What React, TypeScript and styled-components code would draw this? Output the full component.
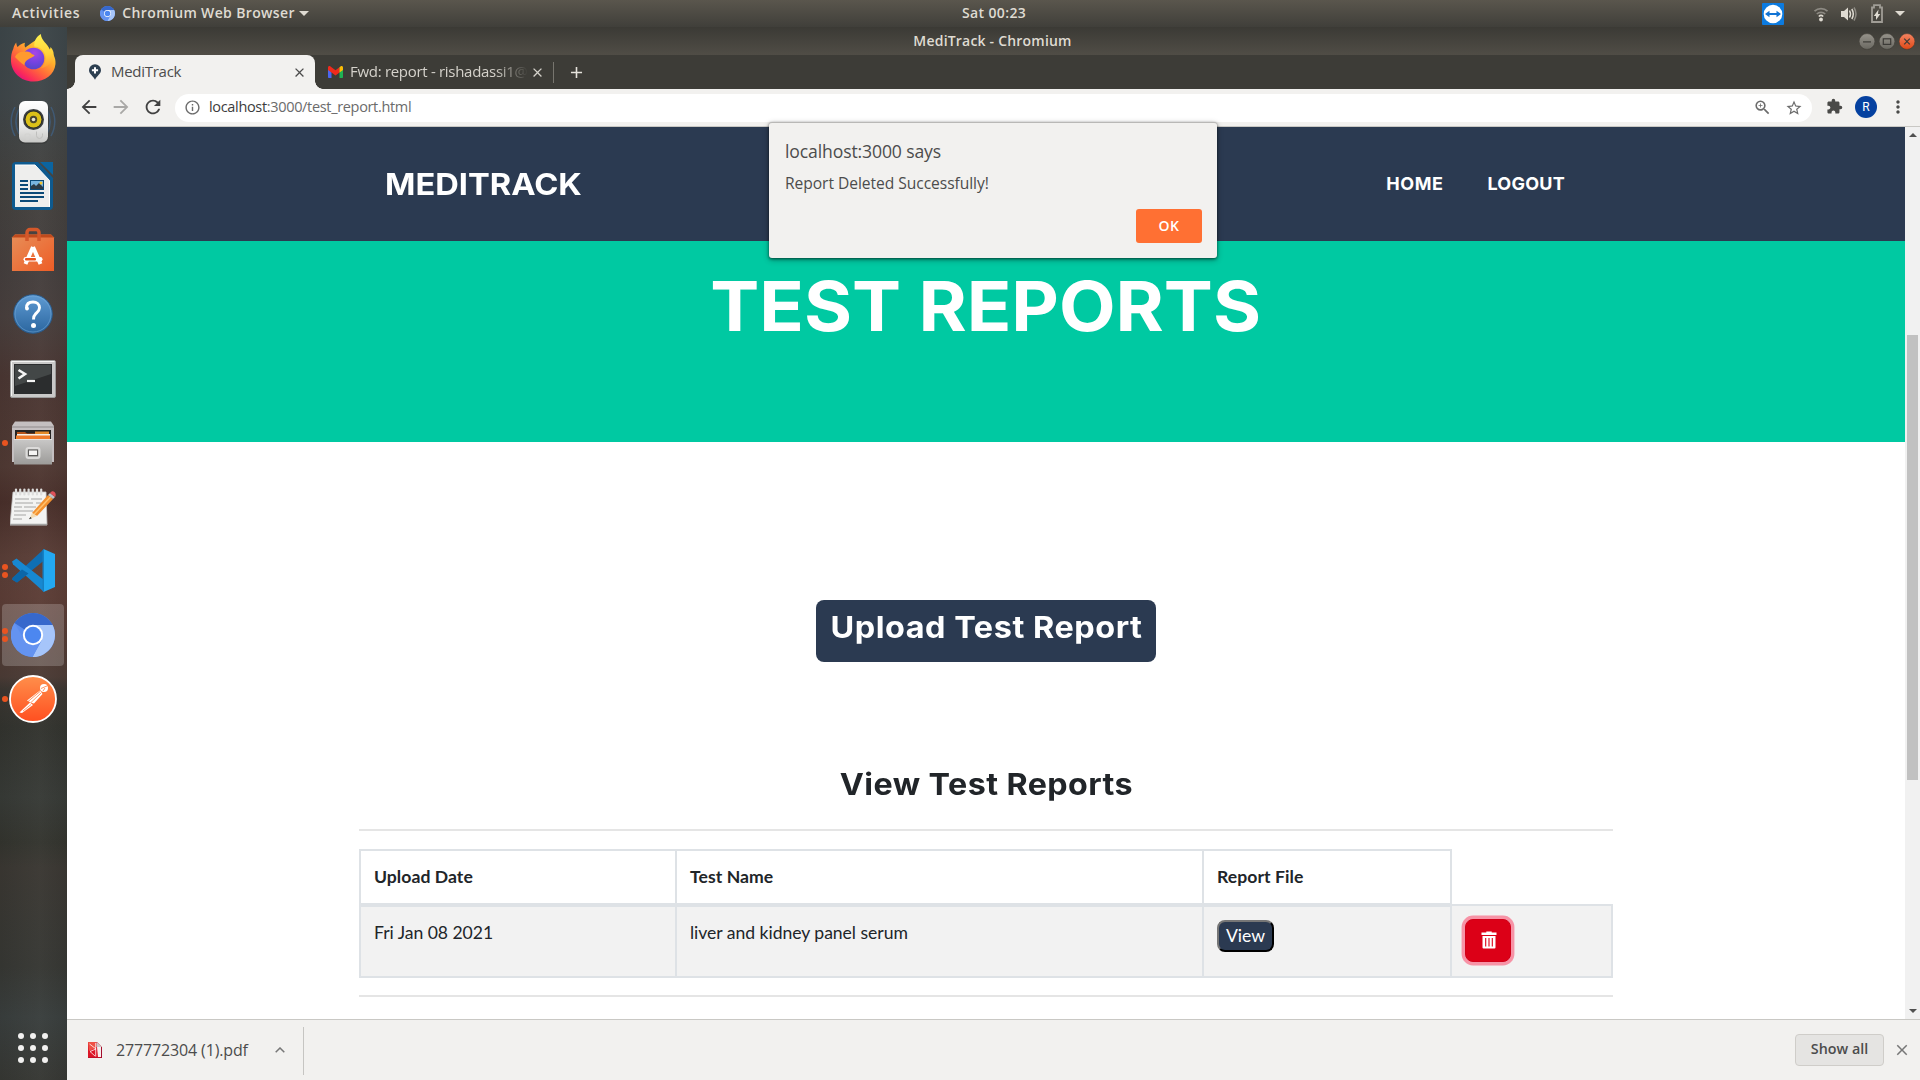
import React from 'react';
import styled, { createGlobalStyle, css } from 'styled-components';
import {
  MdArrowBack, MdArrowForward, MdRefresh, MdInfoOutline, MdZoomIn, MdStarBorder, MdExtension, MdMoreVert, MdClose, MdAdd,
} from 'react-icons/md';

const ui = '"Open Sans", "Noto Sans", sans-serif';
const display = 'Inter, sans-serif';
const body = 'Lato, sans-serif';
const navy = '#2c3e50';
const navyBg = '#2b3a51';
const teal = '#00c9a2';

const GlobalStyle = createGlobalStyle`
  * { box-sizing: border-box; }
  html, body { margin: 0; height: 1080px; overflow: hidden; background: #fff; }
  svg { display: block; flex: none; }
`;

const Desktop = styled.div`
  display: grid;
  grid-template: 27px 1053px / 67px 1853px;
  width: 1920px;
  height: 1080px;
  font-family: ${ui};
`;

/* ---------- top panel ---------- */
const TopPanel = styled.header`
  grid-column: 1 / 3;
  display: grid;
  grid-template-columns: 950px auto 1fr;
  align-items: center;
  padding: 0 15px 0 12px;
  background: linear-gradient(#5a564d, #403f3a);
  color: #dfdbd2;
  font: 600 14px/26px ${ui};
`;
const PanelGroup = styled.div`
  display: flex;
  align-items: center;
`;
const PanelEnd = styled(PanelGroup)`
  justify-content: flex-end;
  padding-left: 3px;
`;
const PanelText = styled.span<{ $ls: number; $ml?: number }>`
  letter-spacing: ${p => p.$ls}px;
  margin-left: ${p => p.$ml ?? 0}px;
  padding-bottom: 1px;
  white-space: nowrap;
`;
const Caret = styled.i<{ $ml: number }>`
  margin-left: ${p => p.$ml}px;
  border: 5px solid transparent;
  border-top: 5px solid #dfdbd2;
  border-bottom: 0;
`;
const Gap = styled.span<{ $w: number }>`
  width: ${p => p.$w}px;
  flex: none;
`;

/* ---------- dock ---------- */
const Dock = styled.aside`
  display: flex;
  flex-direction: column;
  background:
    linear-gradient(90deg, rgba(0,0,0,.06), rgba(255,255,255,.02) 60%, rgba(0,0,0,.05)),
    linear-gradient(#3e474a 0, #40474a 70px, #44423f 160px, #453f3e 240px, #49403e 290px, #4b3733 350px,
      #513a34 440px, #4a302b 475px, #5b3f38 530px, #5d3e37 570px, #553c35 610px, #4c3c36 650px, #3c3732 662px, #33342f 700px,
      #383b37 770px, #34352f 815px, #3b3833 840px, #373834 940px, #3a3f3e 990px, #373834 1053px);
`;
const DockCell = styled.div<{ $active?: boolean }>`
  position: relative;
  height: 64.1px;
  display: flex;
  align-items: center;
  justify-content: center;
  padding: 0 1px 2px 0;
  flex: none;
  ${p => p.$active && css`
    &::before {
      content: '';
      position: absolute;
      inset: 0 3px 2px 2px;
      border-radius: 4px;
      background: rgba(255, 255, 255, .2);
    }
  `}
  > svg { position: relative; }
`;
const Dots = styled.div`
  position: absolute;
  left: 2px;
  top: 31px;
  display: flex;
  flex-direction: column;
  gap: 2px;
  transform: translateY(-50%);
`;
const Dot = styled.i`
  width: 6px;
  height: 6px;
  border-radius: 50%;
  background: #e95420;
`;
const AppsGrid = styled.div`
  margin: auto auto 17px 18px;
  display: grid;
  grid-template-columns: repeat(3, 6px);
  gap: 6px;
`;
const AppsDot = styled.i`
  width: 6px;
  height: 6px;
  border-radius: 50%;
  background: #f2f1f0;
`;

/* ---------- browser window ---------- */
const Browser = styled.section`
  position: relative;
  display: grid;
  grid-template: 28px 34px 38px 892px 61px / 1853px;
`;
const TitleBar = styled.div`
  display: grid;
  grid-template-columns: 1fr auto 1fr;
  align-items: center;
  padding-right: 5px;
  background: linear-gradient(#3b3a35, #504d46);
  color: #dfdbd2;
  font: 600 14px/28px ${ui};
`;
const TitleText = styled.span`
  letter-spacing: .2px;
  padding-left: 3px;
`;
const WinButtons = styled.div`
  display: flex;
  justify-content: flex-end;
  gap: 4px;
`;
const TabStrip = styled.div`
  display: flex;
  background: #3d3c37;
  padding-left: 8px;
  font: 400 15px/32px ${ui};
`;
const Tab = styled.div<{ $w: number; $active?: boolean }>`
  position: relative;
  display: flex;
  align-items: center;
  width: ${p => p.$w}px;
  height: 34px;
  padding-left: 13px;
  color: ${p => (p.$active ? '#4c4c4c' : '#d5d2cb')};
  ${p => p.$active && css`
    background: #f2f1ef;
    border-radius: 8px 8px 0 0;
    &::before, &::after {
      content: '';
      position: absolute;
      bottom: 0;
      width: 8px;
      height: 8px;
    }
    &::before { left: -8px; background: radial-gradient(circle at 0 0, transparent 7.5px, #f2f1ef 8px); }
    &::after { right: -8px; background: radial-gradient(circle at 100% 0, transparent 7.5px, #f2f1ef 8px); }
  `}
`;
const TabLabel = styled.span<{ $w: number; $ls: number; $ml: number; $fade?: boolean }>`
  width: ${p => p.$w}px;
  margin-left: ${p => p.$ml}px;
  padding-bottom: 2px;
  letter-spacing: ${p => p.$ls}px;
  white-space: nowrap;
  ${p => p.$fade && css`
    -webkit-mask-image: linear-gradient(90deg, #000 145px, transparent 178px);
    mask-image: linear-gradient(90deg, #000 145px, transparent 178px);
  `}
`;
const TabDivider = styled.i`
  width: 1px;
  height: 21px;
  margin: 7px 13px 0 -1px;
  background: #77756e;
`;
const NewTab = styled.div`
  display: flex;
  align-items: center;
  color: #e6e3dc;
`;

const Toolbar = styled.div`
  display: flex;
  align-items: center;
  padding: 0 12px 2px 11px;
  background: #f2f1ef;
  border-bottom: 1px solid #c9c8c4;
  color: #4a4a48;
`;
const NavIcons = styled.div`
  display: flex;
  gap: 10px;
  width: 97px;
  color: #414141;
  svg:nth-child(2) { color: #a9a8a6; }
`;
const Omnibox = styled.div`
  display: flex;
  align-items: center;
  flex: 1;
  height: 28px;
  margin: 2px 14px 0 0;
  padding: 0 9px 0 9px;
  border-radius: 14px;
  background: #fff;
  color: #6b6b6b;
  font: 400 14.5px/26px ${ui};
`;
const Url = styled.span`
  margin-left: 8px;
  padding-bottom: 2px;
  letter-spacing: -.33px;
  flex: 1;
  b { font-weight: 400; color: #3c3c3c; }
`;
const ToolbarEnd = styled.div`
  display: flex;
  align-items: center;
`;
const Avatar = styled.span`
  display: flex;
  align-items: center;
  justify-content: center;
  width: 22px;
  height: 22px;
  margin: 0 11px 0 12px;
  border-radius: 50%;
  background: #0541a0;
  color: #fff;
  font: 400 12px/22px Roboto, sans-serif;
`;

/* ---------- page ---------- */
const Viewport = styled.div`
  display: grid;
  grid-template-columns: 1838px 15px;
  overflow: hidden;
`;
const Page = styled.main`
  display: flex;
  flex-direction: column;
  align-items: center;
  background: #fff;
`;
const Navbar = styled.nav`
  display: flex;
  align-items: center;
  width: 100%;
  height: 114px;
  padding: 0 340px 2px 318px;
  background: ${navyBg};
  color: #fff;
  font-family: ${display};
  font-weight: 700;
`;
const Wide = styled.span<{ $x: number; $from?: string }>`
  display: inline-block;
  transform: scaleX(${p => p.$x});
  transform-origin: ${p => p.$from ?? 'center'};
`;
const Brand = styled.a`
  font-size: 30.5px;
  flex: 1;
`;
const NavLink = styled.a<{ $ls: number }>`
  margin-left: 44px;
  font-size: 18px;
  letter-spacing: ${p => p.$ls}px;
`;
const Hero = styled.section`
  width: 100%;
  height: 201px;
  padding-top: 30px;
  background: ${teal};
  text-align: center;
`;
const HeroTitle = styled.h1`
  margin: 0;
  color: #fff;
  font: 700 69px/70px ${display};
`;
const UploadButton = styled.button`
  width: 340px;
  height: 62px;
  margin-top: 158px;
  padding: 0 0 8px;
  border: 0;
  border-radius: 8px;
  background: ${navyBg};
  color: #fff;
  font: 700 30px/54px ${display};
  letter-spacing: .5px;
  white-space: nowrap;
`;
const SectionTitle = styled.h2`
  margin: 102px 0 25px;
  color: #212529;
  font: 700 30px/40px ${display};
  letter-spacing: .4px;
`;
const Rule = styled.hr`
  width: 1254px;
  height: 2px;
  margin: 0;
  border: 0;
  flex: none;
  background: #e5e5e5;
`;
const ReportTable = styled.table`
  width: 1254px;
  margin: 18px 0 17px;
  border-collapse: collapse;
  table-layout: fixed;
  color: #212529;
  font: 400 17.6px/26px ${body};
  th, td {
    padding: 13px 13px 0;
    border: 2px solid #dee2e6;
    text-align: left;
    vertical-align: top;
  }
  th { border-bottom-width: 4px; font-weight: 700; letter-spacing: .05px; }
  td { background: #f2f2f2; letter-spacing: -.04px; }
`;
const HeadRow = styled.tr`height: 55px;`;
const BodyRow = styled.tr`height: 72px;`;
const Col = styled.col<{ $w: number }>`width: ${p => p.$w}px;`;
const ViewButton = styled.button`
  display: block;
  width: 57px;
  height: 32px;
  padding: 0 0 1px;
  border: 2px outset #767676;
  border-color: #767676 #212121 #212121 #767676;
  border-radius: 8px;
  background: ${navyBg};
  color: #fff;
  font: 400 17.6px/27px ${body};
`;
const DeleteButton = styled.button`
  display: flex;
  align-items: center;
  justify-content: center;
  width: 46px;
  height: 43px;
  padding: 0 0 2px 1px;
  border: 1px solid #d00018;
  border-radius: 8px;
  background: #dc0017;
  box-shadow: 0 0 0 3.4px rgba(252, 60, 95, .52);
`;
const ScrollTrack = styled.div`
  display: flex;
  flex-direction: column;
  align-items: center;
  padding: 6px 0 6px;
  background: #f1f1f1;
`;
const Thumb = styled.div`
  width: 11px;
  height: 445px;
  margin: 198px 0 auto;
  background: #c1c1c1;
`;
const Arrow = styled.i<{ $down?: boolean }>`
  border: 4px solid transparent;
  ${p => (p.$down ? 'border-top-color: #505050; border-bottom: 0;' : 'border-bottom-color: #505050; border-top: 0;')}
`;

/* ---------- download shelf ---------- */
const Shelf = styled.footer`
  display: flex;
  align-items: center;
  padding: 0 9px 0 21px;
  border-top: 1px solid #c9c8c4;
  background: #f2f1ef;
  color: #4c4c4c;
  font: 400 16px/58px ${ui};
`;
const FileName = styled.span`
  width: 159px;
  margin-left: 14px;
  letter-spacing: -.14px;
`;
const ShelfDivider = styled.i`
  width: 1px;
  height: 48px;
  margin: 2px auto 0 18px;
  background: #c6c5c2;
`;
const ShowAll = styled.button`
  width: 89px;
  height: 32px;
  margin-right: 9px;
  padding: 0 0 2px;
  border: 1px solid #cfcdc9;
  border-radius: 4px;
  background: #e5e4e2;
  color: #4c4c4c;
  font: 600 14.3px/28px ${ui};
`;

/* ---------- alert ---------- */
const Alert = styled.div`
  position: absolute;
  left: 702px;
  top: 95px;
  width: 448px;
  height: 136px;
  display: flex;
  flex-direction: column;
  padding: 16px 15px 0 16px;
  border-top: 1px solid #b9b8b6;
  border-radius: 3px;
  background: #f2f1ef;
  box-shadow: 0 1px 3px rgba(0, 0, 0, .55), 0 2px 6px rgba(0, 0, 0, .3);
  color: #4c4c4c;
`;
const AlertTitle = styled.div`
  font: 400 17.6px/24px ${ui};
  letter-spacing: -.13px;
`;
const AlertText = styled.div`
  margin-top: 7px;
  font: 400 15.6px/26px ${ui};
  letter-spacing: -.05px;
`;
const OkButton = styled.button`
  align-self: flex-end;
  width: 66px;
  height: 34px;
  margin-top: 13px;
  padding: 0;
  border: 0;
  border-radius: 3px;
  background: #ff7033;
  color: #fff;
  font: 600 14px/34px ${ui};
  letter-spacing: .4px;
`;

/* ---------- drawings ---------- */
const Firefox = () => (
  <svg width="48" height="50" viewBox="0 0 48 50">
    <defs>
      <linearGradient id="ffBody" x1=".85" y1=".1" x2=".2" y2=".95">
        <stop offset="0" stopColor="#ffe946" /><stop offset=".3" stopColor="#ffb02b" /><stop offset=".6" stopColor="#ff6a3a" /><stop offset=".85" stopColor="#fb2d58" /><stop offset="1" stopColor="#e6107c" />
      </linearGradient>
      <linearGradient id="ffFlame" x1=".5" y1="0" x2=".6" y2="1">
        <stop offset="0" stopColor="#fff14f" /><stop offset=".6" stopColor="#ffd13a" /><stop offset="1" stopColor="#ff9a2e" stopOpacity=".7" />
      </linearGradient>
      <radialGradient id="ffGlobe" cx=".55" cy=".25" r=".8">
        <stop offset="0" stopColor="#a745e8" /><stop offset=".55" stopColor="#7443e0" /><stop offset="1" stopColor="#5347c8" />
      </radialGradient>
    </defs>
    <path d="M7.2 9.5c.2 2.2.8 3.6 1.4 4.6C10.200 12.300 12.500 10.600 16 9.800c-.6 1.700-.5 3.200.2 4.600L29 5.500c.3 3 2 5 5 7.500 3 2.600 4.600 5 5.400 7.400.3-1.600.2-3-.1-4.400C44 19.500 47 25 46.500 31 45.500 41.500 36 48.500 24.500 48.500 11 48.500 2.500 38.500 2 28.500c-.3-5 .6-9.500 2.300-12.800.5-2.200 1.400-4.300 2.900-6.200z" fill="url(#ffBody)" />
    <circle cx="24.500" cy="25.500" r="10.800" fill="url(#ffGlobe)" />
    <path d="M31.800 1c-5 3-6.800 7.700-6.500 12.500 4.500.2 8.800 2.600 10.600 7.500 2.300 6-1 12-4.600 14.500C41 33.500 46 27 44.500 19.500c-.5-2-1.500-4-3-5.500 0 1-.2 1.800-.6 2.500C38 10 32.500 8 31.800 1z" fill="url(#ffFlame)" />
    <path d="M6 24c1.500-4 5.500-6 10-5.200 2.800-.8 5.300.2 7 2.500 1.300.2 2.300.6 2.600 1.300-1.800 2.200-4.800 2.500-7.300 4.300-1.600 1.200-3 3-2.800 5.400C12 30 9 27 6 24z" fill="#ff9a2e" />
  </svg>
);
const Rhythmbox = () => (
  <svg width="50" height="50" viewBox="0 0 50 50" fill="none">
    <defs><linearGradient id="rbBox" x2="0" y2="1"><stop stopColor="#fff" /><stop offset=".6" stopColor="#e9e9e8" /><stop offset="1" stopColor="#c8c8c6" /></linearGradient></defs>
    <path d="M7 10c-5 9-5 20 0 29M11 12c-4 8-4 17 0 25M43 10c5 9 5 20 0 29M39 12c4 8 4 17 0 25" stroke="#40658e" strokeWidth="1.500" opacity=".65" />
    <rect x="10.500" y="5" width="30" height="42" rx="6" fill="#2d2d2d" opacity=".4" />
    <rect x="11" y="4" width="29" height="41.500" rx="6" fill="url(#rbBox)" />
    <circle cx="25.500" cy="22.500" r="10.500" fill="#3c3f40" /><circle cx="25.500" cy="22.500" r="9" fill="#272a29" />
    <circle cx="25.500" cy="22.500" r="8" fill="#dcc018" /><circle cx="25.500" cy="22.500" r="3.700" fill="#4b4630" /><circle cx="25.500" cy="22.500" r="1.800" fill="#e9e6d0" />
    <path d="M28.500 34.500v4a3 3 0 0 0 6 0v-2" stroke="#bfbfbd" /><rect x="17" y="37" width="5" height="5" rx="1" stroke="#d2d2d0" />
  </svg>
);
const Writer = () => (
  <svg width="42" height="48" viewBox="0 0 42 48">
    <path d="M4 0h22l15 16v28a4 4 0 0 1-4 4H4a4 4 0 0 1-4-4V4a4 4 0 0 1 4-4z" fill="#0e5a8f" />
    <path d="M28 0h13v13z" fill="#0b64a0" />
    <path d="M3 3h20l14.500 15.500V45H3z" fill="#eeeeed" /><path d="M3 3h20l14.500 15.500V45" fill="none" stroke="#fff" />
    <path d="M8 19h8M8 23h8M8 27h8M8 31h24M8 35h24M8 39h18" stroke="#0b4a78" strokeWidth="2" />
    <rect x="18" y="18" width="14" height="10" fill="#0b4a78" /><rect x="19" y="19" width="12" height="8" fill="#78b4df" />
    <path d="M19 27v-3l3-2 2 2 3-3 4 4v2z" fill="#2c3a45" /><circle cx="29" cy="21" r="1.500" fill="#f4c430" />
  </svg>
);
const Software = () => (
  <svg width="44" height="46" viewBox="0 0 44 46">
    <defs><linearGradient id="swBag" x2="1" y2="1"><stop stopColor="#e78e58" /><stop offset="1" stopColor="#ee5d26" /></linearGradient></defs>
    <path d="M1 10.500l3-3h36l3 3V44H1z" fill="url(#swBag)" /><path d="M1 10.500l3-3h36l3 3z" fill="#c04a1c" />
    <path d="M16 14V5.500a3 3 0 0 1 3-3h6a3 3 0 0 1 3 3V14" fill="none" stroke="#d4582a" strokeWidth="3.500" />
    <path d="M22 20l-7.500 17M22 20l7.500 17" stroke="#fff" strokeWidth="4" />
    <rect x="12.500" y="30" width="19" height="4.500" rx="2.200" fill="#fff" /><rect x="14" y="31" width="11" height="2.500" rx="1" fill="#e95420" />
  </svg>
);
const Help = () => (
  <svg width="40" height="40" viewBox="0 0 40 40">
    <defs><linearGradient id="hpBall" x2="0" y2="1"><stop stopColor="#5f9bd3" /><stop offset="1" stopColor="#2b669f" /></linearGradient></defs>
    <circle cx="20" cy="20" r="19.300" fill="url(#hpBall)" stroke="#285c8f" strokeWidth="1" />
    <circle cx="20" cy="20" r="18" fill="none" stroke="#7fb0dc" strokeWidth=".8" opacity=".6" />
    <path d="M13.500 14c0-4 2.700-6 6.500-6s6.500 2.200 6.500 5.800c0 3-2 4.200-3.700 5.800-1.600 1.500-2.300 2.800-2.300 6" fill="none" stroke="#fff" strokeWidth="2.900" />
    <circle cx="14" cy="14.500" r="1.900" fill="#fff" /><circle cx="20.500" cy="31.500" r="2.500" fill="#fff" />
  </svg>
);
const Terminal = () => (
  <svg width="46" height="38" viewBox="0 0 46 38">
    <rect x=".5" y=".5" width="45" height="37" rx="1.500" fill="#c9c9c8" stroke="#9b9b9a" />
    <path d="M1.500 36V1.500H44.500" fill="none" stroke="#f4f4f3" />
    <rect x="4" y="4" width="38" height="30" fill="#2b2d2e" /><path d="M5 5h36v9L5 26z" fill="#4a4d4e" opacity=".8" />
    <path d="M8.500 10l6.500 4-6.500 4.500" fill="none" stroke="#f5f5f5" strokeWidth="2.600" /><path d="M17 21h8" stroke="#f5f5f5" strokeWidth="2.200" />
  </svg>
);
const Files = () => (
  <svg width="42" height="44" viewBox="0 0 42 44">
    <defs><linearGradient id="flBox" x2="0" y2="1"><stop stopColor="#c9c8c7" /><stop offset="1" stopColor="#9c9b99" /></linearGradient></defs>
    <path d="M3 .5h36L42 5v36H0V5z" fill="#c4bfc0" /><path d="M0 5h42v2H0z" fill="#aaa5a6" />
    <rect x="3" y="9" width="36" height="12" fill="#262423" />
    <path d="M5 11h8l2 1.500h22V20H5z" fill="#b5531a" /><path d="M23 10.500h14V14H23z" fill="#e58b2b" /><path d="M5 13h33v3H5z" fill="#f4f1ea" /><path d="M4 14.500h34V19H4z" fill="#ef7b2b" />
    <path d="M2 18h38v25.500H2z" fill="url(#flBox)" /><path d="M2 18.500h38" stroke="#e4e3e2" />
    <rect x="14.500" y="27" width="13" height="10" rx="2" fill="none" stroke="#dcdbda" strokeWidth="2" /><rect x="16.500" y="29" width="9" height="5.500" fill="#f6f5f4" stroke="#5d5c5b" />
  </svg>
);
const Gedit = () => (
  <svg width="46" height="38" viewBox="0 0 46 38">
    <path d="M3 4h33l1 33H0z" fill="#f3f3f2" stroke="#c7c7c6" strokeWidth=".8" /><path d="M0 36.500h37" stroke="#a4a4a3" strokeWidth="1.500" />
    {[0, 1, 2, 3, 4, 5, 6].map(i => <path key={i} d={`M${6 + i * 4.2} 1.5v5`} stroke="#dddddc" strokeWidth="2.2" strokeLinecap="round" />)}
    <path d="M5 11h14M21 11h11M5 15h18M26 15h5M4 19h8M14 19h12M4 23h19M4 27h12M3 31h9" stroke="#a5a5a4" strokeWidth="1" />
    <path d="M22 25L38 7l5 4-16 17z" fill="#f3912f" /><path d="M24 26.500L40.500 9" stroke="#ffc26e" strokeWidth="1.500" />
    <path d="M22 25l5 3-7.500 3z" fill="#f4dcb4" /><path d="M20.300 29l1.500 1.200-2.800 1z" fill="#222" />
    <path d="M38 7l2-2 5 4-2 2z" fill="#bfc3c6" /><path d="M40 5c1.500-2 3-2.500 4.500-1s1.600 3.200.5 5z" fill="#e0525a" />
  </svg>
);
const VsCode = () => (
  <svg width="43" height="43" viewBox="0 0 43 43">
    <path d="M31.500 0L43 5v33l-11.500 5z" fill="#23a9f2" />
    <path d="M1 28.500L32 0v11.500L5 33.500l-5-3z" fill="#0f6fb5" /><path d="M0 12.500l4.500-3L32 31v12L1 15.200z" fill="#1788d1" />
    <path d="M1 28.500L10 20.500l6.500 4L5 33.500l-5-3z" fill="#0c66a8" />
    <path d="M32 0v43l-1.500-1V1.200z" fill="#1580c4" />
  </svg>
);
const Chromium = ({ size = 44 }: { size?: number }) => (
  <svg width={size} height={size} viewBox="0 0 44 44">
    <circle cx="22" cy="22" r="22" fill="#5b8def" />
    <path d="M22 22L3.500 10.100A22 22 0 0 1 40.500 10.100L41.600 12H22z" fill="#3768cc" />
    <path d="M22 12h19.600A22 22 0 0 1 21.500 44l9.300-17z" fill="#a6c5fa" />
    <path d="M3.500 10.100l10 17 8.500 5 8.300-4L21.500 44A22 22 0 0 1 3.500 10.100z" fill="#6493f0" />
    <circle cx="22" cy="22" r="10.200" fill="#fff" /><circle cx="22" cy="22" r="8.200" fill="#4c87f0" />
  </svg>
);
const Postman = () => (
  <svg width="48" height="48" viewBox="0 0 48 48">
    <defs><linearGradient id="pmBall" x2="0" y2="1"><stop stopColor="#ff8f4b" /><stop offset="1" stopColor="#ff4f20" /></linearGradient></defs>
    <circle cx="24" cy="24" r="23" fill="url(#pmBall)" stroke="#fff" strokeWidth="1.800" />
    <circle cx="35" cy="13" r="4" fill="#fff" /><path d="M32 13.500l7-3M34 16l2-3" stroke="#ff7a3c" strokeWidth=".8" />
    <path d="M31 15.500l2.500 3.500L25 28.500l-3-.8-4-2.200z" fill="#fff" /><path d="M19 26.500L31 16.500M22 27.500L32 18" stroke="#ff7a3c" strokeWidth=".8" />
    <path d="M21 27.500l3 2.500-11 8-2.500-.5 2-2z" fill="#fff" /><path d="M14 36l8-6.500" stroke="#ff6a30" strokeWidth=".7" />
  </svg>
);
const TeamViewer = () => (
  <svg width="22" height="22" viewBox="0 0 22 22">
    <rect width="22" height="22" rx="1" fill="#0c7be0" /><circle cx="11" cy="11" r="9.300" fill="#fff" />
    <path d="M3 11l4.500-3.200v2.200h7V7.800L19 11l-4.500 3.200V12h-7v2.200z" fill="#1173d4" />
  </svg>
);
const Wifi = () => (
  <svg width="16" height="16" viewBox="0 0 16 16" fill="none" stroke="#8d8a83" strokeWidth="1.700">
    <path d="M1.500 5.200a9.500 9.500 0 0 1 13 0M3.800 8a6 6 0 0 1 8.400 0" /><path d="M5.800 10.500a3.200 3.200 0 0 1 4.400 0" stroke="#dfdbd2" /><circle cx="8" cy="13.500" r="1.900" fill="#dfdbd2" stroke="none" />
  </svg>
);
const Volume = () => (
  <svg width="16" height="16" viewBox="0 0 16 16" fill="none" strokeWidth="1.500">
    <path d="M0 5h3l4-3.500v13L3 11H0z" fill="#dfdbd2" /><path d="M8.500 4.500q2 3.500 0 7M10.800 3q3 5 0 10" stroke="#dfdbd2" /><path d="M13 1.500q4 6.500 0 13" stroke="#8d8a83" />
  </svg>
);
const Battery = () => (
  <svg width="12" height="19" viewBox="0 0 12 19">
    <path d="M1 3.500h2V1.200h6v2.300h2V18H1z" fill="none" stroke="#a09d96" strokeWidth="1.800" /><path d="M7.500 5.500L2.800 12H5v4l4.300-6H7z" fill="#dfdbd2" />
  </svg>
);
const WindowButton = ({ kind }: { kind: 'min' | 'max' | 'close' }) => (
  <svg width="16" height="17" viewBox="0 0 16 17">
    <defs>
      <linearGradient id="wbGray" x2="0" y2="1"><stop stopColor="#96938b" /><stop offset="1" stopColor="#6a6861" /></linearGradient>
      <linearGradient id="wbRed" x2="0" y2="1"><stop stopColor="#f38462" /><stop offset="1" stopColor="#df4816" /></linearGradient>
    </defs>
    <circle cx="8" cy="8.500" r="7.900" fill={kind === 'close' ? 'url(#wbRed)' : 'url(#wbGray)'} stroke="#37352f" strokeWidth=".5" />
    <g fill="none" stroke="#3c3b37" strokeWidth="1.200">
      {kind === 'min' && <path d="M4 8.900h8" />}
      {kind === 'max' && <rect x="4.300" y="5.800" width="7.400" height="5.600" />}
      {kind === 'close' && <path d="M5.200 5.700l5.600 5.600M10.800 5.700l-5.600 5.600" />}
    </g>
  </svg>
);
const MedPin = () => (
  <svg width="14" height="16" viewBox="0 0 14 16">
    <path d="M7 .3a6 6 0 0 1 6 6c0 3.700-4 5.400-6 9.400-2-4-6-5.700-6-9.400a6 6 0 0 1 6-6z" fill={navy} /><path d="M7 3.200v6.200M3.900 6.300h6.200" stroke="#fff" strokeWidth="2" />
  </svg>
);
const Gmail = () => (
  <svg width="15" height="12" viewBox="0 0 15 12">
    <path d="M0 2v9.200c0 .5.300.8.800.8H3.500V4z" fill="#4b66f0" /><path d="M15 2v9.200c0 .5-.3.800-.8.800h-2.700V4z" fill="#1fb254" />
    <path d="M0 1.500C0 .2 1.500-.4 2.500.4L7.500 4.200 11.500 1.200V6.500l-4 3-4-3L0 4z" fill="#f02a1d" /><path d="M11.500 1.200l1-.8C13.500-.4 15 .2 15 1.500V4l-3.500 2.500z" fill="#fbbc04" />
  </svg>
);
const Pdf = () => (
  <svg width="14" height="16" viewBox="0 0 14 16">
    <path d="M0 0h9l5 5v11H0z" fill="#dc1526" /><path d="M0 0h8v6L1 9z" fill="#ee5145" />
    <path d="M9 5l4-.5V15h-3z" fill="#f7efef" /><path d="M8.500 0L14 5H8.500z" fill="#c9c9c9" />
    <path d="M1.500 2l6.500 5L2 9.500 7 14M7.700 1v13.500" stroke="#fff" strokeWidth=".9" fill="none" opacity=".85" /><path d="M13.500 5v11H0" stroke="#a30d2c" fill="none" />
  </svg>
);
const Trash = () => (
  <svg width="16" height="18" viewBox="0 0 16 18">
    <path d="M.5 1.500h4.800V.5h5.400v1h4.800v2.600H.5z" fill="#fff" /><path d="M1.500 5h13v11.500a1 1 0 0 1-1 1h-11a1 1 0 0 1-1-1z" fill="#fff" />
    <path d="M4.700 7v8.500M8 7v8.500M11.300 7v8.500" stroke="#dc0017" strokeWidth="1.100" />
  </svg>
);
const ChevronUp = () => (
  <svg width="10" height="6" viewBox="0 0 10 6"><path d="M.7 5.300L5 1l4.300 4.300" fill="none" stroke="#777" strokeWidth="1.500" /></svg>
);

const dockItems: { icon: React.ReactNode; windows?: number; active?: boolean }[] = [
  { icon: <Firefox /> }, { icon: <Rhythmbox /> }, { icon: <Writer /> }, { icon: <Software /> }, { icon: <Help /> }, { icon: <Terminal /> },
  { icon: <Files />, windows: 1 }, { icon: <Gedit /> }, { icon: <VsCode />, windows: 2 },
  { icon: <Chromium />, windows: 2, active: true }, { icon: <Postman />, windows: 1 },
];

export default function App() {
  return (
    <Desktop>
      <GlobalStyle />
      <TopPanel>
        <PanelGroup>
          <PanelText $ls={0.7}>Activities</PanelText>
          <Gap $w={20} /><Chromium size={15} />
          <PanelText $ls={0.36} $ml={7}>Chromium Web Browser</PanelText>
          <Caret $ml={4} />
        </PanelGroup>
        <PanelText $ls={0.37}>Sat 00:23</PanelText>
        <PanelEnd>
          <TeamViewer /><Gap $w={29} /><Wifi /><Gap $w={12} /><Volume /><Gap $w={14} /><Battery /><Caret $ml={12} />
        </PanelEnd>
      </TopPanel>

      <Dock>
        {dockItems.map((d, i) => (
          <DockCell key={i} $active={d.active}>
            {d.icon}
            {d.windows && <Dots>{Array.from({ length: d.windows }, (_, n) => <Dot key={n} />)}</Dots>}
          </DockCell>
        ))}
        <AppsGrid>{Array.from({ length: 9 }, (_, n) => <AppsDot key={n} />)}</AppsGrid>
      </Dock>

      <Browser>
        <TitleBar>
          <span />
          <TitleText>MediTrack - Chromium</TitleText>
          <WinButtons><WindowButton kind="min" /><WindowButton kind="max" /><WindowButton kind="close" /></WinButtons>
        </TitleBar>

        <TabStrip>
          <Tab $w={240} $active>
            <MedPin /><TabLabel $w={181} $ls={-0.28} $ml={9}>MediTrack</TabLabel><MdClose size={15} />
          </Tab>
          <Tab $w={239}>
            <Gmail /><TabLabel $w={178} $ls={-0.3} $ml={7} $fade>Fwd: report - rishadassi1@</TabLabel><Gap $w={2} /><MdClose size={15} />
          </Tab>
          <TabDivider /><NewTab><MdAdd size={19} /></NewTab>
        </TabStrip>

        <Toolbar>
          <NavIcons><MdArrowBack size={22} /><MdArrowForward size={22} /><MdRefresh size={22} /></NavIcons>
          <Omnibox>
            <MdInfoOutline size={17} />
            <Url><b>localhost</b>:3000/test_report.html</Url>
            <MdZoomIn size={19} /><Gap $w={13} /><MdStarBorder size={18} />
          </Omnibox>
          <ToolbarEnd><MdExtension size={17} /><Avatar>R</Avatar><MdMoreVert size={20} /></ToolbarEnd>
        </Toolbar>

        <Viewport>
          <Page>
            <Navbar>
              <Brand><Wide $x={1.07} $from="left">MEDITRACK</Wide></Brand>
              <NavLink $ls={0.5}>HOME</NavLink>
              <NavLink $ls={0.25}>LOGOUT</NavLink>
            </Navbar>
            <Hero><HeroTitle><Wide $x={1.065}>TEST REPORTS</Wide></HeroTitle></Hero>
            <UploadButton><Wide $x={1.08}>Upload Test Report</Wide></UploadButton>
            <SectionTitle><Wide $x={1.075}>View Test Reports</Wide></SectionTitle>
            <Rule />
            <ReportTable>
              <colgroup><Col $w={316} /><Col $w={527} /><Col $w={248} /><Col $w={161} /></colgroup>
              <thead><HeadRow><th>Upload Date</th><th>Test Name</th><th>Report File</th></HeadRow></thead>
              <tbody>
                <BodyRow>
                  <td>Fri Jan 08 2021</td>
                  <td>liver and kidney panel serum</td>
                  <td><ViewButton>View</ViewButton></td>
                  <td><DeleteButton aria-label="Delete"><Trash /></DeleteButton></td>
                </BodyRow>
              </tbody>
            </ReportTable>
            <Rule />
          </Page>
          <ScrollTrack><Arrow /><Thumb /><Arrow $down /></ScrollTrack>
        </Viewport>

        <Shelf>
          <Pdf /><FileName>277772304 (1).pdf</FileName><ChevronUp /><ShelfDivider />
          <ShowAll>Show all</ShowAll><MdClose size={18} color="#777" />
        </Shelf>

        <Alert role="alertdialog">
          <AlertTitle>localhost:3000 says</AlertTitle>
          <AlertText>Report Deleted Successfully!</AlertText>
          <OkButton>OK</OkButton>
        </Alert>
      </Browser>
    </Desktop>
  );
}
